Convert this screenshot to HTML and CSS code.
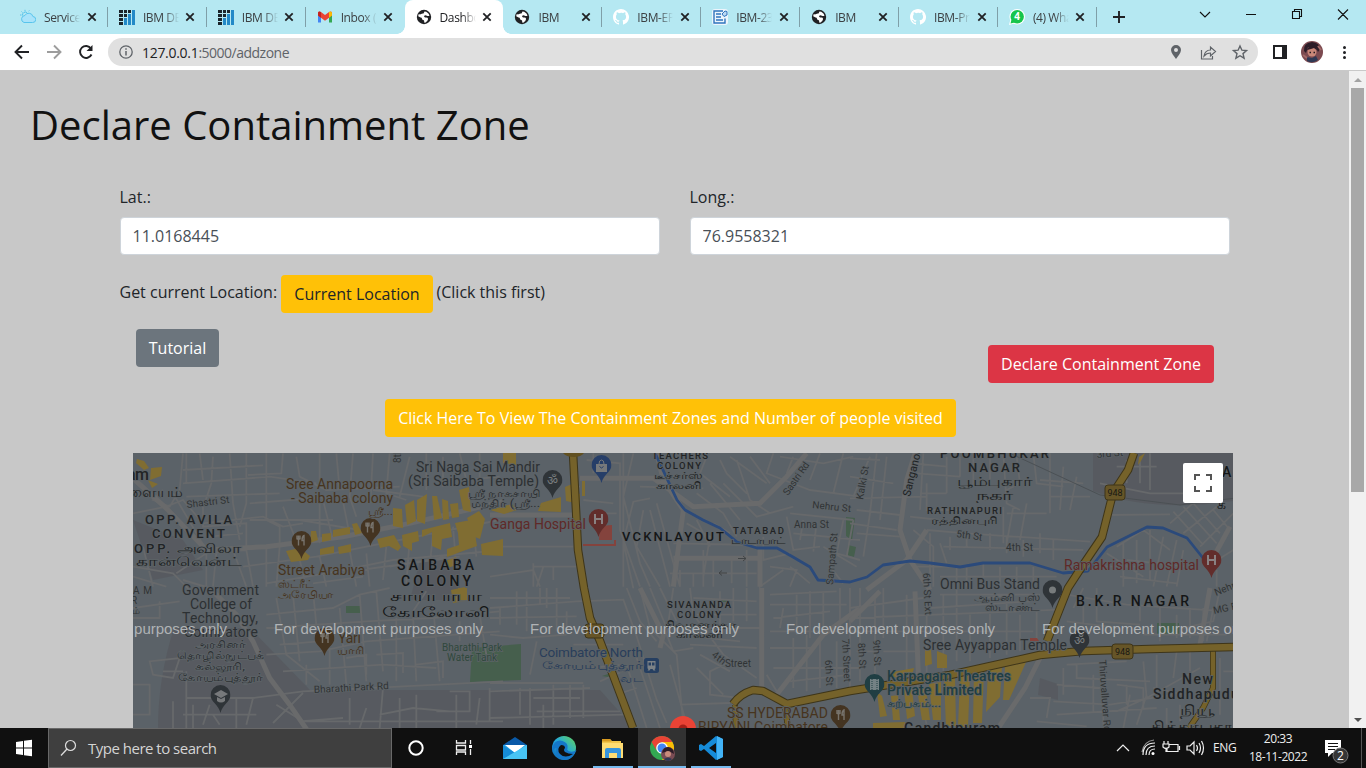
FILE: index.html
```html
<!DOCTYPE html>
<html lang="en">
<head>
<meta charset="utf-8">
<title>Dashboard</title>
<link rel="stylesheet" href="styles.css">
</head>
<body>
<svg width="0" height="0" class="defs" aria-hidden="true">
  <defs>
    <symbol id="x" viewBox="0 0 10 10"><path d="M1.3 1.3l7.4 7.4M8.7 1.3L1.3 8.7" stroke="#202124" stroke-width="1.8"/></symbol>
    <symbol id="globe" viewBox="0 0 16 16"><circle cx="8" cy="8" r="7.2" fill="#202124"/><path d="M8.500 2.500q3.500.3 5 4-1.200 1-2.600.2-1.400-.8-2.300-.3-1 .6-.2 1.500.6.7 1.900.6 1.700 0 1.800 1.400-.2 2.200-2.900 3.800-1.200.2-1-1 .2-1.500-1-1.700-1.400-.2-1.300-1.500Q6 8.600 4.600 8.500L2.200 7.300q0-1 .6-2.200 1.300.7 2.300-.1.900-.7 2-.6 1-.2.9-1z" fill="#fff"/></symbol>
    <symbol id="ibm" viewBox="0 0 16 16"><path d="M0 1h4v3H0zM5 1h3v3H5zM0 5h4v3H0zM5 5h3v3H5zM0 9h4v3H0zM0 13h4v3H0zM9 1h3v3H9z" fill="#1b252b"/><path d="M5 9h3v7H5zM9 5h3v11H9zM13 1h3v15h-3z" fill="#2389c7"/></symbol>
    <symbol id="github" viewBox="0 0 16 16"><path fill="#fff" d="M8 0C3.580 0 0 3.580 0 8c0 3.540 2.290 6.530 5.470 7.590.4.070.55-.17.55-.38v-1.490c-2.010.37-2.530-.49-2.690-.94-.09-.23-.48-.94-.82-1.130-.28-.15-.68-.52-.01-.53.63-.01 1.080.58 1.230.82.72 1.210 1.870.87 2.330.66.070-.52.280-.87.510-1.070-1.780-.2-3.640-.89-3.640-3.950 0-.87.310-1.590.82-2.150-.08-.2-.36-1.020.08-2.120 0 0 .67-.21 2.200.82A7.600 7.600 0 0 1 8 3.860c.68 0 1.360.09 2 .27 1.530-1.040 2.200-.82 2.200-.82.44 1.100.16 1.920.08 2.120.51.56.82 1.270.82 2.150 0 3.070-1.870 3.750-3.650 3.950.29.25.54.73.54 1.480v2.200c0 .21.15.46.55.38A8 8 0 0 0 8 0z"/></symbol>
    <symbol id="pin" viewBox="-10 -10 20 29"><path d="M0 18C-2 9-10 7-10 0A10 10 0 0 1 10 0C10 7 2 9 0 18z"/></symbol>
    <symbol id="fork" viewBox="-6 -6 12 12"><path d="M-4-5v4M-2.500-5v4M-1-5v4M-4-1.500h3M-2.500-1v6M3 5v-10q-2 1-2 5h2" fill="none" stroke="#77736c" stroke-width="1.400"/></symbol>
    <linearGradient id="edge" x1="0" y1="1" x2="1" y2="0"><stop offset="0" stop-color="#0b62b8"/><stop offset=".5" stop-color="#23a8dd"/><stop offset="1" stop-color="#66d653"/></linearGradient>
  </defs>
</svg>

<header class="tabs">
  <div class="tab"><svg viewBox="0 0 16 16"><path d="M4 13.500h8.500a3 3 0 0 0 .4-6 4.300 4.300 0 0 0-8-1A3.600 3.600 0 0 0 4 13.500z" fill="#a9e3fa" stroke="#58c4ec"/><path d="M5 .8v1.500M1.500 2.500l1 1M0 6h1.500M8.600 2.300l.8-.9M2.500 6.500A2.900 2.900 0 0 1 7 3.600" fill="none" stroke="#58c4ec"/></svg><span>Service</span><svg class="close"><use href="#x"/></svg></div>
  <div class="tab"><svg><use href="#ibm"/></svg><span>IBM DB2</span><svg class="close"><use href="#x"/></svg></div>
  <div class="tab"><svg><use href="#ibm"/></svg><span>IBM DB2</span><svg class="close"><use href="#x"/></svg></div>
  <div class="tab plain"><svg viewBox="0 0 16 16"><path d="M1 4v9.500h3V7z" fill="#4285f4"/><path d="M15 4v9.500h-3V7z" fill="#34a853"/><path d="M1 3.500v3L8 11.700l7-5.200v-3q-1-1.800-3-.5L8 6 4 3Q2 1.700 1 3.500z" fill="#ea4335"/><path d="M12 3q3-1.500 3 1.500v2l-3 2.300z" fill="#fbbc04"/><path d="M4 3Q1 1.500 1 4.500v2l3 2.300z" fill="#c5221f"/></svg><span>Inbox (2)</span><svg class="close"><use href="#x"/></svg></div>
  <div class="tab active"><svg><use href="#globe"/></svg><span>Dashboard</span><svg class="close"><use href="#x"/></svg></div>
  <div class="tab"><svg><use href="#globe"/></svg><span>IBM</span><svg class="close"><use href="#x"/></svg></div>
  <div class="tab"><svg><use href="#github"/></svg><span>IBM-EPBL</span><svg class="close"><use href="#x"/></svg></div>
  <div class="tab"><svg viewBox="0 0 16 16"><rect width="16" height="16" rx="3" fill="#edf5fc"/><path d="M11 2H2v12h11V9.500M4 5h5M4 8h5M4 11h7" fill="none" stroke="#2f74bd" stroke-width="1.400"/><path d="M10 5l3-3 2 .5V6l-3 1.500z" fill="#bcd8f2" stroke="#2f74bd"/></svg><span>IBM-235</span><svg class="close"><use href="#x"/></svg></div>
  <div class="tab"><svg><use href="#globe"/></svg><span>IBM</span><svg class="close"><use href="#x"/></svg></div>
  <div class="tab"><svg><use href="#github"/></svg><span>IBM-Pro</span><svg class="close"><use href="#x"/></svg></div>
  <div class="tab"><svg viewBox="0 0 16 16"><circle cx="8.200" cy="7.800" r="7.800" fill="#fff"/><path d="M0 16l1.300-5 4 3.500z" fill="#fff"/><circle cx="8.200" cy="7.800" r="6.700" fill="#17c54c"/><path d="M1.500 14.500l1-4 3.200 3z" fill="#17c54c"/><text x="8.200" y="11.400" class="wa">4</text></svg><span>(4) Wha</span><svg class="close"><use href="#x"/></svg></div>
  <svg class="plus" viewBox="0 0 12 12"><path d="M6 0v12M0 6h12" stroke="#202124" stroke-width="1.900"/></svg>
  <svg class="win" viewBox="1190 0 176 28"><path d="M1200 12l5 5 5-5M1246 14.500h10M1292.500 11.500h7v7h-7zM1294.500 11v-1.500h7v7h-1.500M1338 9.500l10 10M1348 9.500l-10 10" fill="none" stroke="#111" stroke-width="1.100"/></svg>
</header>

<nav class="toolbar">
  <svg class="navicons" viewBox="0 0 108 36"><g fill="none" stroke-width="1.900"><path d="M29 18H16M22 11.500L15.500 18l6.500 6.500" stroke="#202124"/><path d="M47 18h13M54 11.500l6.500 6.500-6.500 6.500" stroke="#9d9d9d"/><path d="M91 14.500a6 6 0 1 0 .5 6" stroke="#202124"/></g><path d="M92.500 11v6h-6z" fill="#202124"/></svg>
  <div class="omni">
    <svg class="info" viewBox="0 0 14 14"><circle cx="7" cy="7" r="6.200" fill="none" stroke="#5f6368" stroke-width="1.300"/><path d="M7 6v4.500M7 3.300v1.500" stroke="#5f6368" stroke-width="1.500"/></svg>
    <span class="url"><b>127.0.0.1</b>:5000/addzone</span>
    <svg class="omniicons" viewBox="1166 38 92 28"><path fill-rule="evenodd" d="M1176 59c-2-3-5-6-5-9a5 5 0 0 1 10 0c0 3-3 6-5 9zm0-11a2 2 0 1 0 0 4 2 2 0 0 0 0-4z" fill="#5f6368"/><path d="M1201.500 50v9h11v-3M1204 56q1-6 6.500-6v-3l5 4.500-5 4.500v-3q-4 0-6.500 3z" fill="none" stroke="#5f6368" stroke-width="1.200"/><path d="M1240 46l1.900 4.200 4.600.4-3.500 3 1.100 4.600-4.100-2.500-4.100 2.500 1.100-4.600-3.500-3 4.600-.4z" fill="none" stroke="#5f6368" stroke-width="1.400"/></svg>
  </div>
  <svg class="right" viewBox="1258 34 108 36"><path d="M1273 45h14v14h-14zm2 2v10h7V47z" fill="#202124" fill-rule="evenodd"/><circle cx="1312" cy="52" r="11" fill="#7c4a50"/><path d="M1304 51q-1-8 8-9 8 1 8 7l-2 3-2-4-8-1-2 6z" fill="#2b1d28"/><ellipse cx="1312" cy="52" rx="4.500" ry="4.500" fill="#c98778"/><path d="M1307 50q1-4 6-4 4 1 4 4l-3-2-3 1z" fill="#2b1d28"/><path d="M1309.500 52.500h1.500M1313.500 52.500h1.500" stroke="#221820" stroke-width="1.500"/><path d="M1307 57l5 1 4-2 2 4q-6 4-11 1z" fill="#2f3854"/><path d="M1303 55l4 3M1318 46l3 4" stroke="#a36a68" stroke-width="2"/><g fill="#202124"><circle cx="1344.500" cy="47.500" r="1.500"/><circle cx="1344.500" cy="52.500" r="1.500"/><circle cx="1344.500" cy="57.500" r="1.500"/></g></svg>
</nav>

<div class="view">
  <main class="page">
    <h1>Declare Containment Zone</h1>
    <form class="form">
      <div class="fields">
        <label>Lat.:<input value="11.0168445"></label>
        <label>Long.:<input value="76.9558321"></label>
      </div>
      <div class="locate"><span class="get">Get current Location:</span><button type="button" class="btn warn dark">Current Location</button><span class="hint">(Click this first)</span></div>
      <div class="actions"><button type="button" class="btn gray">Tutorial</button><button type="button" class="btn red">Declare Containment Zone</button></div>
      <button type="button" class="btn warn visit">Click Here To View The Containment Zones and Number of people visited</button>
    </form>
    <div class="map">
    <svg viewBox="133 453 1100 275" class="mapsvg">
      <rect x="133" y="453" width="1100" height="275" fill="#5b6268"/>
      <path d="M158 728q0-50 16-100h76l60 62h290l34 38zM133 520l50 20 20 30-50 10zM420 560h40v40h-50zM1093 453h140v48q-80 12-140-10zM1040 678l18 6v16l-20-5z" fill="#55585e" opacity=".75"/>
      <path d="M346 606h14v7h-14zM472 648l49-4v36l-51 2z" fill="#465f4d"/>
      <path d="M846 517l9 1-3 22-6-4zM848 545l8 2-2 10-7-2zM1157 623h22v12h-22zM720 599h10v3h-10zM602 676l12-4v6z" fill="#465f4d"/>
      <g transform="translate(133 450) scale(.33333)" class="st">
        <path d="M150 10l-10 110-30 50-50-20 30-30M150 60l240-14M150 100l260-20 140 20M0 190l100-20 50-20 60 70 180-20 60 30 60-10M160 10v90M200 10l10 80M240 20l-5 80-20 60M290 10l10 150 20 110M340 10v150l-20 70M400 10v200l40 20v60M450 10l-5 60-100 5M490 20l10 60 80 40 220-10M560 10v90M610 10l10 110M660 10l-10 130 20 60M720 10l-8 150M770 10l-10 120 60 20M830 20l-30 120M880 10v110M930 20v90M980 10l20 80 100-10M1040 10v100M160 140l280-10M210 170v60l130-10v80M230 260l100-10M340 300l-120 10-90 60M120 130l100 170M220 300v110M250 310l-10 100M300 300l40 110M340 300l20 110M150 390l100 30M400 290v120M440 290l-10 120M400 400l180-30 200-40 330-30M500 300l-50-130M560 280V150M600 270l-30-120M650 255l-20-100M500 330l20 80M560 320l20 90M650 300l20 110M700 310l10 100M760 290l-10 100M830 270l-10 130M900 250l-10 100M960 230l10 120M1020 210l10 110M330 350l220-30 250-50 300-60M350 160l250-20M350 210h250M720 120l150 20M500 210l180 30M0 350l120 20 60 60M30 290l30 120M0 380l100 30M540 400l150-20M680 360l300-40M770 350l170-30"/>
        <path d="M0 85l100 90 120 125 180-10 230-30 200-40 280-65" class="major"/>
      </g>
      <g transform="translate(133 588) scale(.33333)" class="st">
        <path d="M0 90h80V40M0 60l140-20M50 220l90-10-20 60-60-10zM0 290h50v90H0M90 250h60M160 250v170M160 330h200l150-20 600-30M400 80l200-20 80-40 90-20M400 120l300-20 200-10 200-20M430 30l30 170 100 80M480 20l20 200M540 10l10 100M620 60l20 230M680 20l20 260M730 10l20 240M790 90v190M840 80l10 200M900 50l20 230M400 200l160-10 140-30 400-30M450 250l300-20 160 10M440 170l120-10M520 230v60M590 180v110M640 210l60-10v60M730 200l80-5v60M850 230l80-10v50M880 10l-40 60M980 100v60M1040 80l20 120M510 315l-90 90M500 400l130-10M650 330v80M700 360l-20 60M750 300l-10 120M800 330v90M850 320v100M910 370h100v-60h-60M970 320v100M1040 330l-10 80M1070 300v100M120 340v80M180 350v70M230 350l-20 60M310 330v90M360 330l-20 80M150 380h220M430 350l80 50h600M260 410l-20-30M740 380l100-20 110 10"/>
        <path d="M230 0l80 80 50 80 50 110 60 80 55 80" class="major"/>
      </g>
      <g transform="translate(490 450) scale(.33333)" class="st">
        <path d="M290 30l100 10v200l60 170M310 10v60M400 10v400M430 10l-30 130 50 200 30 70M480 145l-50 10-30 120 30 140M460 180l-20 110 70 120M480 180l60 230M500 160l70 250M280 150l90 10M300 190h80M130 350h140M0 380l130-20 20 50M30 290h220M130 340v70M160 350l-20 60M190 350v40M270 110h-40M450 110l190 5M650 20l-20 50 90 70M690 30l20 40 60 60M740 30l40 120 60 40M620 130l80 60 40 70M660 100l90 110M700 100l100 100 110-30M590 220l70 40-20 120M620 210l40 80M670 220l50 30M720 20l110 80M780 20l60 80M850 10l-20 60 130 50 150 20M870 20l130 20 90-20M910 20l-20 50M990 10l-30 80M1060 10l-30 120M900 190l190 20M890 200l20 100 80-10M910 250l200 20M940 210l-10 60M980 215l-10 90M1060 210l-20 100 70 20M1090 210l-20 110M550 280l250 5M570 360v50M610 370v40M640 300v110M670 320v90M725 320v80M770 300v110M540 370h260M810 320v90l70-50M820 260v70l80-20M840 350l80 10-20 50M900 350l60 50M1000 290l100 60M1020 350l40 50"/>
        <path d="M270 85h220l120 85 200-10 80-80 60-70M500 10l20 80 60 90M580 180l-30 230M550 325h260M810 290v120M0 195h270" class="major"/>
      </g>
      <g transform="translate(490 588) scale(.33333)" class="st">
        <path d="M0 60l260-20 140-5 40 110 60 190 30 70M0 90l260-5M0 140l100 10 130-10M0 30h240M30 60v50M80 10v100M110 10v120M150 0v50M170 0v60M200 0v130M230 70v60M250 170h150M140 160l-20 100M0 285h280M90 300v80M120 300v110M190 290v120M240 290v100M280 290v100M0 310l300-10M130 330h140M140 370h250M0 390l400-10M160 350v70M300 240l100-10M330 280l90-40M380 320l60-20M410 230l60 190M440 210l70 210M410 0l40 100 50 60M450 0l30 120 80 80 20 210M480 0l50 120M510 0l50 100M550 0l-20 140 20 50 60-10M600 0l10 80 90 120 100 70M610 30l190 10M620 80h180M650 120h160M650 110v40l100 10M600 170l200 10M690 10v100M730 0v100M770 0v100M720 220l-60 30v70l90 10M620 240l80 80M570 350l150-5M630 200l90 50M540 230l50 180M840 20l200-10M840 50h230M850 90l170-20M840 130h270M880 60l-10 60M920 20v120M960 10v140M1000 10v140M1050 0v140M840 180h130M910 150v150M950 140v170M990 150v150M1040 160v140M1080 0v300M850 240h260M900 280l180-20M830 260l30 50"/>
        <path d="M815 0v300M1110 60l-110 80-140 180M450 0l70 140-10 40" class="major"/>
      </g>
      <g transform="translate(850 450) scale(.33333)" class="st">
        <path d="M0 25l90 5M80 10l-20 180-20 130M110 20l-20 190M0 80l130 20M0 145l230-5M20 180l130 15M0 220l140 20M20 250l130 10M60 20l-50 120M190 40l100 10M220 10l-10 170M200 70l130 10M230 100v80h130M210 130h80M290 20v110M330 20v60M370 0v110M420 0v100M460 10l10 150 40 20M500 20l10 80-40 20M550 10l10 90 80 10M600 10v180M640 50l-10 130M680 80l-20 100M570 90l130 10M600 140h120M470 190h120M530 160l-20 110M490 170l-20 110M460 170v110M180 200l90 10M230 240l120 10 370 25M270 280l20 60M280 290l420 10M300 260v40M350 250v40M420 250v50M470 260v50M520 270v50M570 250v60M610 270v60M190 240l60 50v120M240 250v160M200 350h120v60M350 350v60M400 340v70M450 350v60M500 350v60M550 350v60M270 380h350M760 195l200-2M750 100l150 30h130M870 20v80M900 10v110M800 50h120M830 30v70M970 185l90 100M1000 170l100 110M1030 160l80 90M960 220l80-70M1000 250l100-80M1050 290l100-100M1090 180l50 60M1070 350l80-50M800 290l80-50 80 60M770 310l110 70M820 280v130M860 270v130M900 240v150M940 260l-30 150M980 270l-30 140M750 350h110M830 330l180 20M810 380l170 20M1000 300l-20 110M1100 360v50"/>
        <path d="M195 10l-25 80-20 150 30 90 60 90M170 330l-120 90M230 240l-60 90M1140 230l-60 110" class="major"/>
        <path d="M480 10l270 125 240 30 160-20" class="rail"/>
      </g>
      <g transform="translate(850 588) scale(.33333)" class="st">
        <path d="M0 60l220-30M0 90l630-25M0 130h550M30 0v280M75 20v240M100 0v150M170 20v250M230 50v210M280 20v230M320 0v220M360 80v140M420 60v150M470 30v170M510 80v110M560 70v110M270 20h300M240 60l300-20M400 30l100-10M20 190h70M100 190h110M650 20l180 30 300 20M700 50v60M740 0v100l130 10M870 40v60M930 40v120M980 80v70M1020 60v90M1060 60v100M650 100l160 20M880 140h250M700 0l-30 60M1110 0l-20 100-90 20M1090 60l-20 100M650 230l180-10M640 240v80M680 230v40l220 10M730 260v110M620 290l130 10M610 340l170 10 190-30M620 380l300-20M560 400l150 15M760 230v180M800 290l80 10v60M830 290v60M880 220l10 110M920 200v110M980 190l-10 80M1020 190v60M800 370l90-40 160-90M820 420l20-100M860 410l30-90M910 300l90 20M950 360v50M990 350v50M1110 210v170M1120 250h30M200 280l30 130M540 330h60l-10 60"/>
        <path d="M195 10l10 250M575 200l-50 100-80 120M90 10L0 100M1080 0l-30 170" class="major"/>
      </g>
      <g fill="#806d32">
        <path d="M137 459l7 2 5 7-5 2-8-7zM151 468l11-1-1 9-11 4zM148 480l10 4-6 4zM286 551l14-3 10 8-2 4-17 2zM311 531l5 0 2 9-8 3zM320 549l14-3v7l-14 2zM322 534l9-1v7l-9 2zM333 530l17-3v7l-17 3zM338 547l13-3v8l-12 2zM352 524l5-1 5 10-7 2zM377 539l17-4 7 12-3 4-9-5-9 2zM393 508l9 1 1 19-10-2zM405 505l9-5 2 21-9 4zM417 500l10-6-2 30-8-3zM432 496h5l5 22-8 2zM442 499l6 2 1 18-6 1zM450 504l8-1 1 14-7 1zM459 490l10-3 2 25-8-2zM402 535l16-4 1 10-7 2v8l-9-5zM422 530l28-7 2 14-10 2-1 11-9-4v-14l-10 5zM455 523l21-4 4 9-5 6 2 12-14 5-16 6v-8l12-4-1-12zM467 518l12-7 6 8-5 20-5-2zM481 544l22-5v17l-21-1zM565 487l7-3v9l8 1 0 10-14-3zM541 503l20-6v15l-23-1zM503 450l13 2v13l-13-2zM451 590l14-3v14l-12 2zM445 561l11-4 1 8-10 3zM458 588h9v12h-9zM490 543l10-2v13h-10zM490 510l22-6 5 6-13 4zM582 481l3 0v15h-3z"/>
        <path d="M888 673l26-5-2 7-22 3zM925 650h6l1 14-7 2zM937 651l10 4v13h-10zM891 696l7-1 2 25h-7zM904 690l8-1 3 27-8 3zM877 692l5 4 5 20-7 1zM917 689l9-1 4 32h-8zM929 684l12-2v38h-8zM944 680l11-2 1 48h-10zM960 676l10-1-2 52h-10zM974 672l10-2-2 53h-9zM988 670l14-3-2 30-14 15zM1005 666l22-6-18 40h-6zM873 723l32-1v6h-32zM1145 453l-4 8-3 4 1-8z"/>
      </g>
      <path d="M600 526l12-1v15h-13zM583 544h31v-4h2v6h-33zM1030 638h7l2 3h-9z" fill="#84433d"/>
      <g fill="none" stroke-linejoin="round">
        <path d="M655 453L677 500 685 510 703 520 720 528 737 542 757 548 777 548 793 557 810 567 818 580 850 582 867 577 883 565 910 561 930 563 960 567 983 563 1030 563 1063 573 1088 571 1107 547 1147 527 1163 528 1187 538 1203 558" stroke="#2b4a7b" stroke-width="2.800"/>
        <path d="M1213 651v37l-10 20-14 20M785 706l3 22M735 705l1 23" stroke="#3e3519" stroke-width="6"/>
        <path d="M1213 651v37l-10 20-14 20M785 706l3 22M735 705l1 23" stroke="#75622a" stroke-width="4.500"/>
        <path d="M573 453l3 57 2 40 6 38 6 30 10 23 13 34 20 53M1134 453l-6 17-15 23-11 44-19 28-15 23-21 53M1233 647l-83 2-67 2-43 4-90 20-100 16-63 13-24-13-10-1q-13 4-20 14" stroke="#3e3519" stroke-width="8.500"/>
        <path d="M573 453l3 57 2 40 6 38 6 30 10 23 13 34 20 53M1134 453l-6 17-15 23-11 44-19 28-15 23-21 53M1233 647l-83 2-67 2-43 4-90 20-100 16-63 13-24-13-10-1q-13 4-20 14" stroke="#75622a" stroke-width="6.500"/>
      </g>
      <path d="M563 453h21q-3 4-10 4-8 0-11-4z" fill="#615021"/>
      <g fill="#665527" stroke="#3e3519"><rect x="1105" y="485" width="20" height="15" rx="3"/><rect x="1112" y="644" width="21" height="15" rx="3"/><rect x="585" y="624" width="19" height="14" rx="3"/></g>
      <g fill="#443421"><use href="#pin" x="291.500" y="531" width="20" height="29"/><use href="#pin" x="360.500" y="518" width="20" height="29"/><use href="#pin" x="314.500" y="628" width="20" height="29"/><use href="#pin" x="830.500" y="705" width="20" height="29"/></g>
      <use href="#fork" x="295" y="534.500" width="12" height="12"/><use href="#fork" x="364" y="521.500" width="12" height="12"/><use href="#fork" x="319" y="632" width="12" height="12"/><use href="#fork" x="835" y="709" width="12" height="12"/>
      <g fill="#2f3438"><use href="#pin" x="542.500" y="470" width="20" height="29"/><use href="#pin" x="210.500" y="685" width="20" height="29"/><use href="#pin" x="1042.500" y="580" width="20" height="29"/><use href="#pin" x="1069.500" y="630" width="20" height="29"/></g>
      <use href="#pin" x="591.500" y="455" width="20" height="29" fill="#263e68"/><use href="#pin" x="864.500" y="674" width="20" height="29" fill="#203e43"/>
      <g fill="#622d2b"><use href="#pin" x="588.500" y="509" width="20" height="29"/><use href="#pin" x="1201.500" y="550" width="20" height="29"/></g>
      <path d="M595 514v10M602 514v10M595 519h7M1208 555v10M1215 555v10M1208 560h7" stroke="#898182" stroke-width="2"/>
      <path d="M214 694l7-4 7 4-7 4zM217 697v4q4 3 8 0v-4l-4 2zM596 464h11v8h-11z" fill="#77797b"/><path d="M599 464q0-4 2.500-4t2.500 4" fill="none" stroke="#77797b"/><path d="M599.500 466.500q2 3 4 0" fill="none" stroke="#263e68"/>
      <circle cx="1052.500" cy="590" r="3.500" fill="#777b7c"/><path d="M870 679h9v11h-9z" fill="#748184"/><path d="M872 679v11M877 679v11" stroke="#203e43" stroke-dasharray="1 1"/>
      <text x="552.500" y="485" class="om">ॐ</text><text x="1079.500" y="645" class="om">ॐ</text>
      <rect x="644" y="658" width="15" height="15" rx="2.500" fill="#263f61"/><path fill-rule="evenodd" d="M647.500 661h8v7q0 1-1 1l1 1.500h-2l-1-1.500h-2l-1 1.500h-2l1-1.500q-1 0-1-1zm1 1.500v3h2.500v-3zm3.500 0v3h2.500v-3z" fill="#7c8286"/>
      <path d="M738 558.500h8m-3-2.500l3 2.500-3 2.500M727 573h-8m3-2.500l-3 2.500 3 2.500" fill="none" stroke="#414446"/>
      <g class="lbl">
        <text x="127" y="480" class="n b16" textLength="22">am</text><text x="127" y="497" class="n b14" textLength="56" lengthAdjust="spacingAndGlyphs">ளையம்</text>
        <text x="187" y="508" transform="rotate(-7 187 508)" class="r" textLength="43">Shastri St</text>
        <g class="n b13"><text x="145" y="524" textLength="87">OPP. AVILA</text><text x="152" y="538" textLength="73">CONVENT</text><text x="134" y="553" textLength="36">OPP.</text><text x="177" y="553" textLength="65" lengthAdjust="spacingAndGlyphs">அவிலா</text><text x="136" y="566" textLength="105" lengthAdjust="spacingAndGlyphs">கான்வென்ட்</text></g>
        <g class="brown"><text x="286" y="489" textLength="107">Sree Annapoorna</text><text x="291" y="503" textLength="102">- Saibaba colony</text><text x="368" y="515" class="t" textLength="25" lengthAdjust="spacingAndGlyphs">ஸ்ரீ...</text><text x="278" y="575" textLength="87">Street Arabiya</text><text x="278" y="588" class="t" textLength="36" lengthAdjust="spacingAndGlyphs">ஸ்ட்ரீட்</text><text x="278" y="598" class="t" textLength="56" lengthAdjust="spacingAndGlyphs">அரேபியா</text><text x="338" y="643" textLength="23">Yari</text><text x="337" y="654" class="t" textLength="27" lengthAdjust="spacingAndGlyphs">யாரி</text><text x="727" y="717.500" textLength="101">SS HYDERABAD</text><text x="698" y="731.500" textLength="130">BIRYANI Coimbatore</text></g>
        <g class="poi"><text x="416" y="472" textLength="124">Sri Naga Sai Mandir</text><text x="408" y="486" textLength="131">(Sri Saibaba Temple)</text><text x="468" y="496.500" class="t" textLength="72" lengthAdjust="spacingAndGlyphs">ஸ்ரீ நாகசாயி</text><text x="471" y="507" class="t" textLength="69" lengthAdjust="spacingAndGlyphs">மந்திர் (ஸ்ரீ...</text>
        <text x="182" y="595" textLength="77">Government</text><text x="190" y="609" textLength="62">College of</text><text x="182" y="623" textLength="76">Technology,</text><text x="184" y="637" textLength="74">Coimbatore</text><text x="195" y="648" class="t" textLength="51" lengthAdjust="spacingAndGlyphs">அரசினர்</text><text x="177" y="659" class="t" textLength="87" lengthAdjust="spacingAndGlyphs">தொழில்நுட்பக்</text><text x="195" y="670" class="t" textLength="50" lengthAdjust="spacingAndGlyphs">கல்லூரி,</text><text x="178" y="681" class="t" textLength="85" lengthAdjust="spacingAndGlyphs">கோயம்புத்தூர்</text></g>
        <text x="401" y="463" transform="rotate(-90 401 463)" class="r">8th St</text>
        <g class="x b14"><text x="397" y="570" textLength="77">SAIBABA</text><text x="401" y="585.500" textLength="70">COLONY</text><text x="390" y="601" textLength="92" lengthAdjust="spacingAndGlyphs">சாய்பாபா</text><text x="382" y="617" textLength="108" lengthAdjust="spacingAndGlyphs">கோலோனி</text></g>
        <text x="133" y="594" class="r" textLength="19">AM</text><text x="131" y="604" class="r">R</text><text x="132" y="614" class="r">ம்</text>
        <g class="green"><text x="442" y="650.500" textLength="60">Bharathi Park</text><text x="447" y="661" textLength="50">Water Tank</text></g>
        <text x="314" y="693" transform="rotate(-3 314 693)" class="r" textLength="75">Bharathi Park Rd</text>
        <text x="490" y="528.500" class="red-label" textLength="96">Ganga Hospital</text>
        <g class="n b9"><text x="652" y="459" textLength="56">TEACHERS</text><text x="657" y="469" textLength="44">COLONY</text><text x="654" y="479" textLength="49" lengthAdjust="spacingAndGlyphs">டீச்சர்ஸ்</text><text x="656" y="489" textLength="46" lengthAdjust="spacingAndGlyphs">காலனி</text><text x="733" y="534" textLength="51">TATABAD</text><text x="731" y="544" textLength="55" lengthAdjust="spacingAndGlyphs">டாடாபாட்</text><text x="667" y="608" textLength="64">SIVANANDA</text><text x="677" y="618" textLength="44">COLONY</text><text x="664" y="628" textLength="72" lengthAdjust="spacingAndGlyphs">சிவானந்தா</text><text x="676" y="638" textLength="47" lengthAdjust="spacingAndGlyphs">காலனி</text><text x="927" y="514" textLength="75">RATHINAPURI</text><text x="931" y="524" textLength="66" lengthAdjust="spacingAndGlyphs">ரத்தினபுரி</text></g>
        <text x="622" y="541" class="x b13" textLength="102">VCKNLAYOUT</text>
        <text x="788" y="496" transform="rotate(-55 788 496)" class="r" textLength="38">Sastri Rd</text><text x="812" y="508" transform="rotate(6 812 508)" class="r" textLength="39">Nehru St</text><text x="794" y="528" class="r" textLength="35">Anna St</text><text x="833" y="585" transform="rotate(-85 833 585)" class="r" textLength="52">Sampath St</text><text x="863" y="500" transform="rotate(-80 863 500)" class="r" textLength="34">Kalki St</text><text x="910" y="497" transform="rotate(-76 910 497)" class="r dk" textLength="54">Sanganoor</text><text x="956" y="537" transform="rotate(8 956 537)" class="r" textLength="26">5th St</text><text x="1006" y="551" class="r" textLength="27">4th St</text><text x="923" y="573" transform="rotate(87 923 573)" class="r" textLength="42">6th St Ext</text>
        <text x="1097" y="458" transform="rotate(-5 1097 458)" class="r">3rd St</text>
        <g class="n b13"><text x="940" y="458" textLength="109">POOMBHUKAR</text><text x="968" y="472" textLength="52">NAGAR</text><text x="957" y="486" textLength="76" lengthAdjust="spacingAndGlyphs">பூம்புகார்</text><text x="976" y="500" textLength="38" lengthAdjust="spacingAndGlyphs">நகர்</text></g>
        <text x="1115" y="496" class="shield">948</text><text x="1122.500" y="655" class="shield">948</text><text x="595" y="634" class="shield">948</text>
        <text x="1064" y="570" class="red-label" textLength="135">Ramakrishna hospital</text>
        <g class="poi"><text x="940" y="589" textLength="100">Omni Bus Stand</text><text x="974" y="600.500" class="t" textLength="66" lengthAdjust="spacingAndGlyphs">ஆம்னி பஸ்</text><text x="985" y="611" class="t" textLength="55" lengthAdjust="spacingAndGlyphs">ஸ்டாண்ட்</text><text x="923" y="650" textLength="144">Sree Ayyappan Temple</text></g>
        <text x="1076" y="606" class="x b14" textLength="113">B.K.R NAGAR</text><text x="1222" y="477" class="x b14">A</text><text x="1217" y="509" class="x b14">க</text>
        <text x="1216" y="596" transform="rotate(-22 1216 596)" class="r">Nehru</text><text x="1214" y="614" transform="rotate(-12 1214 614)" class="r">MG Rd</text>
        <text x="1099" y="660" transform="rotate(86 1099 660)" class="r" textLength="72">Thiruvalluvar Rd</text>
        <text x="711" y="656" transform="rotate(38 711 656)" class="r" textLength="15">4th</text><text x="725" y="667" class="r" textLength="26">Street</text><text x="842" y="639" transform="rotate(87 842 639)" class="r" textLength="43">7th Street</text><text x="825" y="660" transform="rotate(87 825 660)" class="r" textLength="26">6th St</text><text x="858" y="643" transform="rotate(87 858 643)" class="r" textLength="26">8th St</text><text x="873" y="640" transform="rotate(87 873 640)" class="r" textLength="26">9th St</text>
        <g class="blue"><text x="539" y="657" textLength="104">Coimbatore North</text><text x="542" y="669" class="t" textLength="101" lengthAdjust="spacingAndGlyphs">கோயம்புத்தூர்</text><text x="620" y="682" class="t" textLength="23" lengthAdjust="spacingAndGlyphs">வட</text></g>
        <g class="teal"><text x="887" y="681" textLength="124">Karpagam Theatres</text><text x="887" y="695" textLength="95">Private Limited</text><text x="887" y="707" class="t" textLength="54" lengthAdjust="spacingAndGlyphs">கற்பகம்...</text></g>
        <text x="904" y="732.500" class="n b14" textLength="96">Gandhipuram</text>
        <g class="n b14"><text x="1182" y="684" textLength="31">New</text><text x="1153" y="699" textLength="92">Siddhapudur</text><text x="1180" y="715" textLength="35" lengthAdjust="spacingAndGlyphs">நியூ</text><text x="1150" y="731" textLength="92" lengthAdjust="spacingAndGlyphs">சித்தாபுதூர்</text></g>
      </g>
      <circle cx="683" cy="729" r="13" fill="#ea4335"/><circle cx="683" cy="729" r="4.500" fill="#a52018"/>
      <g class="dev"><text x="18" y="634" textLength="209">For development purposes only</text><text x="274" y="634" textLength="209">For development purposes only</text><text x="530" y="634" textLength="209">For development purposes only</text><text x="786" y="634" textLength="209">For development purposes only</text><text x="1042" y="634" textLength="209">For development purposes only</text></g>
      <rect x="1183" y="463" width="40" height="40" rx="2" fill="#fff"/><path d="M1195 480v-5h5M1206 475h5v5M1211 486v5h-5M1200 491h-5v-5" fill="none" stroke="#555" stroke-width="2"/>
    </svg>
    </div>
  </main>
  <aside class="scroll"><i class="up"></i><div class="thumb"></div><i class="down"></i></aside>
</div>

<footer class="taskbar">
  <svg class="start" viewBox="0 0 48 40"><path d="M16 14l7-1v6.500h-7zM24 12.800l8-1.100v7.800h-8zM16 20.500h7V27l-7-1zM24 20.500h8v7.800l-8-1.100z" fill="#fff"/></svg>
  <div class="search"><svg viewBox="0 0 18 18"><circle cx="10.500" cy="6.500" r="5" fill="none" stroke="#ddd" stroke-width="1.200"/><path d="M7 10l-6 6.500" stroke="#ddd" stroke-width="1.300"/></svg><span>Type here to search</span></div>
  <svg class="apps" viewBox="392 728 348 40">
    <circle cx="416" cy="748" r="6.700" fill="none" stroke="#fff" stroke-width="2"/>
    <path d="M456.500 740v3h9v-3M456.500 755v-3h9v3M456.500 745.500h9v4.500h-9zM470.500 740v4M470.500 749v6" fill="none" stroke="#eee" stroke-width="1.300"/><rect x="469" y="745" width="3" height="3" fill="#fff"/>
    <path d="M503 745l12-8 12 8v2h-24z" fill="#0a5aa8"/><path d="M503 745h24v14h-24z" fill="#23a3e8"/><path d="M505 745h20l-10 8z" fill="#fff"/><path d="M503 745l12 8-12 6z" fill="#168bd6"/><path d="M503 759l24-14v14z" fill="#48c4f4"/>
    <circle cx="564" cy="748" r="12" fill="url(#edge)"/><path d="M552.500 747q3-8 10-6 6 2 5 7-1 2 1 3 4 2 8-1-4 10-12 10-10-1-8-12-3 0-4 5z" fill="#1477c9"/><path d="M561 745q-5 4-1 9 5 5 13 0-5 0-8-2-2-2 0-4 0-3-4-3z" fill="#111"/>
    <path d="M602 739h8l2 2h9v17h-19z" fill="#f2c64c"/><path d="M602 743h21v15h-21z" fill="#ffdc72"/><path d="M602 739h8l1.500 2.500H602z" fill="#d99b20"/><path d="M605 758v-8q0-2 2-2h12q2 0 2 2v8h-4v-5h-8v5z" fill="#3794dc"/>
    <path d="M638 728h48v40h-48z" fill="#323232"/><circle cx="662" cy="748" r="12" fill="#33a852"/><path d="M651.600 742A12 12 0 0 1 672.400 742L662 742.500a6 6 0 0 0-5.200 8.500z" fill="#e94335"/><path d="M662 742h10.400A12 12 0 0 1 662 760l5.200-9z" fill="#fbbc05"/><circle cx="662" cy="748" r="5.800" fill="#fff"/><circle cx="662" cy="748" r="4.500" fill="#4285f4"/><circle cx="668" cy="754" r="7" fill="#794c54"/><path d="M662 753q1-6 6-6 6 1 6 7-5-4-12-1z" fill="#2c1c27"/><circle cx="668" cy="754" r="3" fill="#c98c7b"/><path d="M664 759q4-3 8 0-4 4-8 0z" fill="#2f3854"/>
    <path d="M716 736l7 3v18l-7 3-12-11-3 2-2-1v-5l2-1 3 2zM716 743l-7 5 7 5z" fill="#168bd8" fill-rule="evenodd"/><path d="M717 736l6 3v18l-6 3z" fill="#42b3f6"/>
    <path d="M593 766h40v2h-40zM638 766h48v2h-48zM691 766h40v2h-40z" fill="#76b9ed"/>
  </svg>
  <svg class="tray" viewBox="1110 728 98 40"><g fill="none" stroke="#eee" stroke-width="1.200"><path d="M1117 751l6-6 6 6"/><path d="M1143 755q0-12 12-12M1146 755q0-9 9-9M1149 755q0-6 6-6"/><path d="M1142 752q2-11 12-12" opacity=".6"/><path d="M1169 744.500h9v7h-11v-3M1179.500 746v4M1164 741v3M1168 741v3M1163 744h6v3q-3 3-6 0zM1166 749v3"/><path d="M1187 746h3l4-4v12l-4-4h-3zM1196.500 745q2 3 0 6M1199 743q3 5 0 10M1201.500 741q4 7 0 14"/></g><circle cx="1153" cy="753.500" r="1.500" fill="#fff"/></svg>
  <span class="lang">ENG</span>
  <div class="clock"><span>20:33</span><span>18-11-2022</span></div>
  <svg class="notice" viewBox="1316 728 50 40"><path d="M1325 740h16v13h-9l-4 4v-4h-3z" fill="#fff"/><path d="M1328 743.500h10M1328 746.500h10M1328 749.500h7" stroke="#111"/><circle cx="1340.500" cy="755.500" r="7.500" fill="#363636" stroke="#777"/><text x="1340.500" y="760" class="two">2</text><path d="M1361.500 728v40" stroke="#555"/></svg>
</footer>
</body>
</html>
```
FILE: styles.css
```css
* { box-sizing: border-box; }
body { margin: 0; width: 1366px; height: 768px; overflow: hidden; display: flex; flex-direction: column; font-family: "Open Sans", sans-serif; background: #c8c8c8; }
svg { display: block; flex: none; }
.defs { position: absolute; }

.tabs { height: 34px; background: #b5e8f2; display: flex; padding-left: 9px; flex: none; }
.tab { position: relative; width: 98.9px; height: 34px; display: flex; flex: none; align-items: center; padding-left: 11px; font-size: 12px; color: #3c4043; background: linear-gradient(#7f9fa8, #7f9fa8) 98px 7px / 1px 20px no-repeat; }
.tab > svg:first-child { width: 16px; height: 16px; }
.tab span { margin-left: 8px; width: 36px; overflow: hidden; white-space: nowrap; letter-spacing: -.4px; -webkit-mask-image: linear-gradient(90deg, #000 60%, transparent); mask-image: linear-gradient(90deg, #000 60%, transparent); }
.tab .close { width: 10px; height: 10px; margin-left: 6.5px; }
.tab.plain { background: none; }
.tab.active { background: #fff; border-radius: 8px 8px 0 0; color: #202124; }
.active::before, .active::after { content: ""; position: absolute; bottom: 0; width: 8px; height: 8px; }
.active::before { left: -8px; background: radial-gradient(circle at 0 0, transparent 7.5px, #fff 8px); }
.active::after { right: -8px; background: radial-gradient(circle at 100% 0, transparent 7.5px, #fff 8px); }
.plus { width: 12px; height: 12px; margin: 11px 0 0 16px; }
.win { width: 176px; height: 28px; margin-left: auto; }
.wa { font: bold 10px "Open Sans", sans-serif; fill: #fff; text-anchor: middle; }

.toolbar { height: 37px; flex: none; background: #fff; display: flex; border-bottom: 1px solid #c9c9c9; }
.navicons { width: 108px; height: 36px; }
.omni { width: 1150px; height: 28px; margin-top: 4px; border-radius: 14px; background: #e0e0e0; display: flex; align-items: center; padding-left: 11px; }
.info { width: 14px; height: 14px; }
.url { margin-left: 9px; font-size: 14px; color: #5f6368; letter-spacing: -.5px; }
.url b { font-weight: 400; color: #202124; letter-spacing: -.3px; }
.omniicons { width: 92px; height: 28px; margin-left: auto; }
.right { width: 108px; height: 36px; }

.view { height: 657px; display: flex; flex: none; }
.page { width: 1349px; height: 657px; overflow: hidden; background: #c8c8c8; color: #212529; }
h1 { margin: 24px 0 0 30px; font-size: 40px; line-height: 60px; font-weight: 400; color: #111; white-space: nowrap; }
.form { width: 1110px; margin: 30px 0 0 120px; display: flex; flex-direction: column; font-size: 16px; }
.fields { display: grid; grid-template-columns: 540px 540px; gap: 30px; }
.fields label { display: block; line-height: 24px; text-indent: -.5px; }
input { display: block; margin-top: 8px; width: 540px; height: 38px; padding: 6px 12px; border: 1px solid #ced4da; border-radius: 4px; background: #fff; color: #495057; font: 16px "Open Sans", sans-serif; text-indent: -.5px; }
.locate { display: flex; margin-top: 20px; height: 38px; white-space: nowrap; line-height: 34px; }
.get { width: 161px; text-indent: -.5px; }
.hint { margin-left: 3.500px; }
.btn { height: 38px; border: 0; border-radius: 4px; padding: 0; font: 16px/38px "Open Sans", sans-serif; color: #fff; white-space: nowrap; }
.warn { background: #ffc107; }
.dark { width: 152px; color: #212529; }
.actions { display: flex; justify-content: space-between; padding: 16px 16px 0; height: 70px; align-items: flex-start; }
.gray { width: 83px; background: #6c757d; }
.red { width: 226px; margin-top: 16px; background: #dc3545; }
.visit { width: 571px; margin: 16px 0 0 265px; }
.map { width: 1100px; height: 275px; margin: 16px 0 0 133px; overflow: hidden; }
.mapsvg { width: 1100px; height: 275px; }

.st path { fill: none; stroke: #67696b; stroke-width: 5.5; }
.st .major { stroke: #696a6b; stroke-width: 15; }
.st .rail { stroke: #4b5054; stroke-width: 3; }
.lbl { font-family: Roboto, "Noto Sans", sans-serif; }
.lbl text { paint-order: stroke; stroke: #5d6367; stroke-width: 1.5px; }
.n, .x { font-weight: 500; }
.n { fill: #212325; }
.x { fill: #141617; }
.b16 { font-size: 16px; }
.b14 { font-size: 14px; }
.b13 { font-size: 13px; }
.b9 { font-size: 9.5px; }
.r { font-size: 10px; fill: #303335; }
.dk { fill: #202224; font-size: 11px; }
.brown { font-size: 14px; fill: #46341e; }
.poi { font-size: 14px; fill: #2c3033; }
.green { font-size: 10px; fill: #2f483d; }
.red-label { font-size: 14px; fill: #5f2928; }
.blue { font-size: 13.5px; fill: #293e5b; }
.teal { font-size: 14px; fill: #203d42; font-weight: 500; }
.lbl .t { font-size: 11px; font-weight: 400; }
.shield { font-size: 9px; fill: #191813; text-anchor: middle; }
.lbl .shield { stroke: none; }
.om { font: 12px "Noto Sans", sans-serif; fill: #797d7f; text-anchor: middle; }
.dev { font: 15px "Liberation Sans", sans-serif; fill: #b0b3b5; }

.scroll { width: 17px; background: #f1f1f1; display: flex; flex-direction: column; align-items: center; }
.scroll i { border-left: 4px solid transparent; border-right: 4px solid transparent; }
.up { margin-top: 7px; border-bottom: 4px solid #a3a3a3; }
.thumb { margin-top: 6px; width: 13px; height: 404px; background: #a8a8a8; }
.down { margin: auto 0 6px; border-top: 4px solid #505050; }

.taskbar { height: 40px; flex: none; display: flex; background: #101010; color: #eee; }
.start { width: 48px; height: 40px; }
.search { width: 344px; height: 40px; background: #3f3f3f; border: 1px solid #686868; display: flex; align-items: center; padding-left: 11px; font-size: 15px; color: #d4d4d4; letter-spacing: -.5px; }
.search svg { width: 18px; height: 18px; }
.search span { margin-left: 10px; }
.apps { width: 348px; height: 40px; }
.tray { width: 98px; height: 40px; margin-left: 370px; }
.lang { width: 39px; padding-left: 5px; font-size: 12px; line-height: 40px; letter-spacing: -.3px; }
.clock { width: 62px; display: flex; flex-direction: column; align-items: center; font-size: 12px; line-height: 18px; padding-top: 2px; letter-spacing: -.45px; white-space: nowrap; }
.notice { width: 50px; height: 40px; margin-left: auto; }
.two { font: 12px "Open Sans", sans-serif; fill: #fff; text-anchor: middle; }
```
